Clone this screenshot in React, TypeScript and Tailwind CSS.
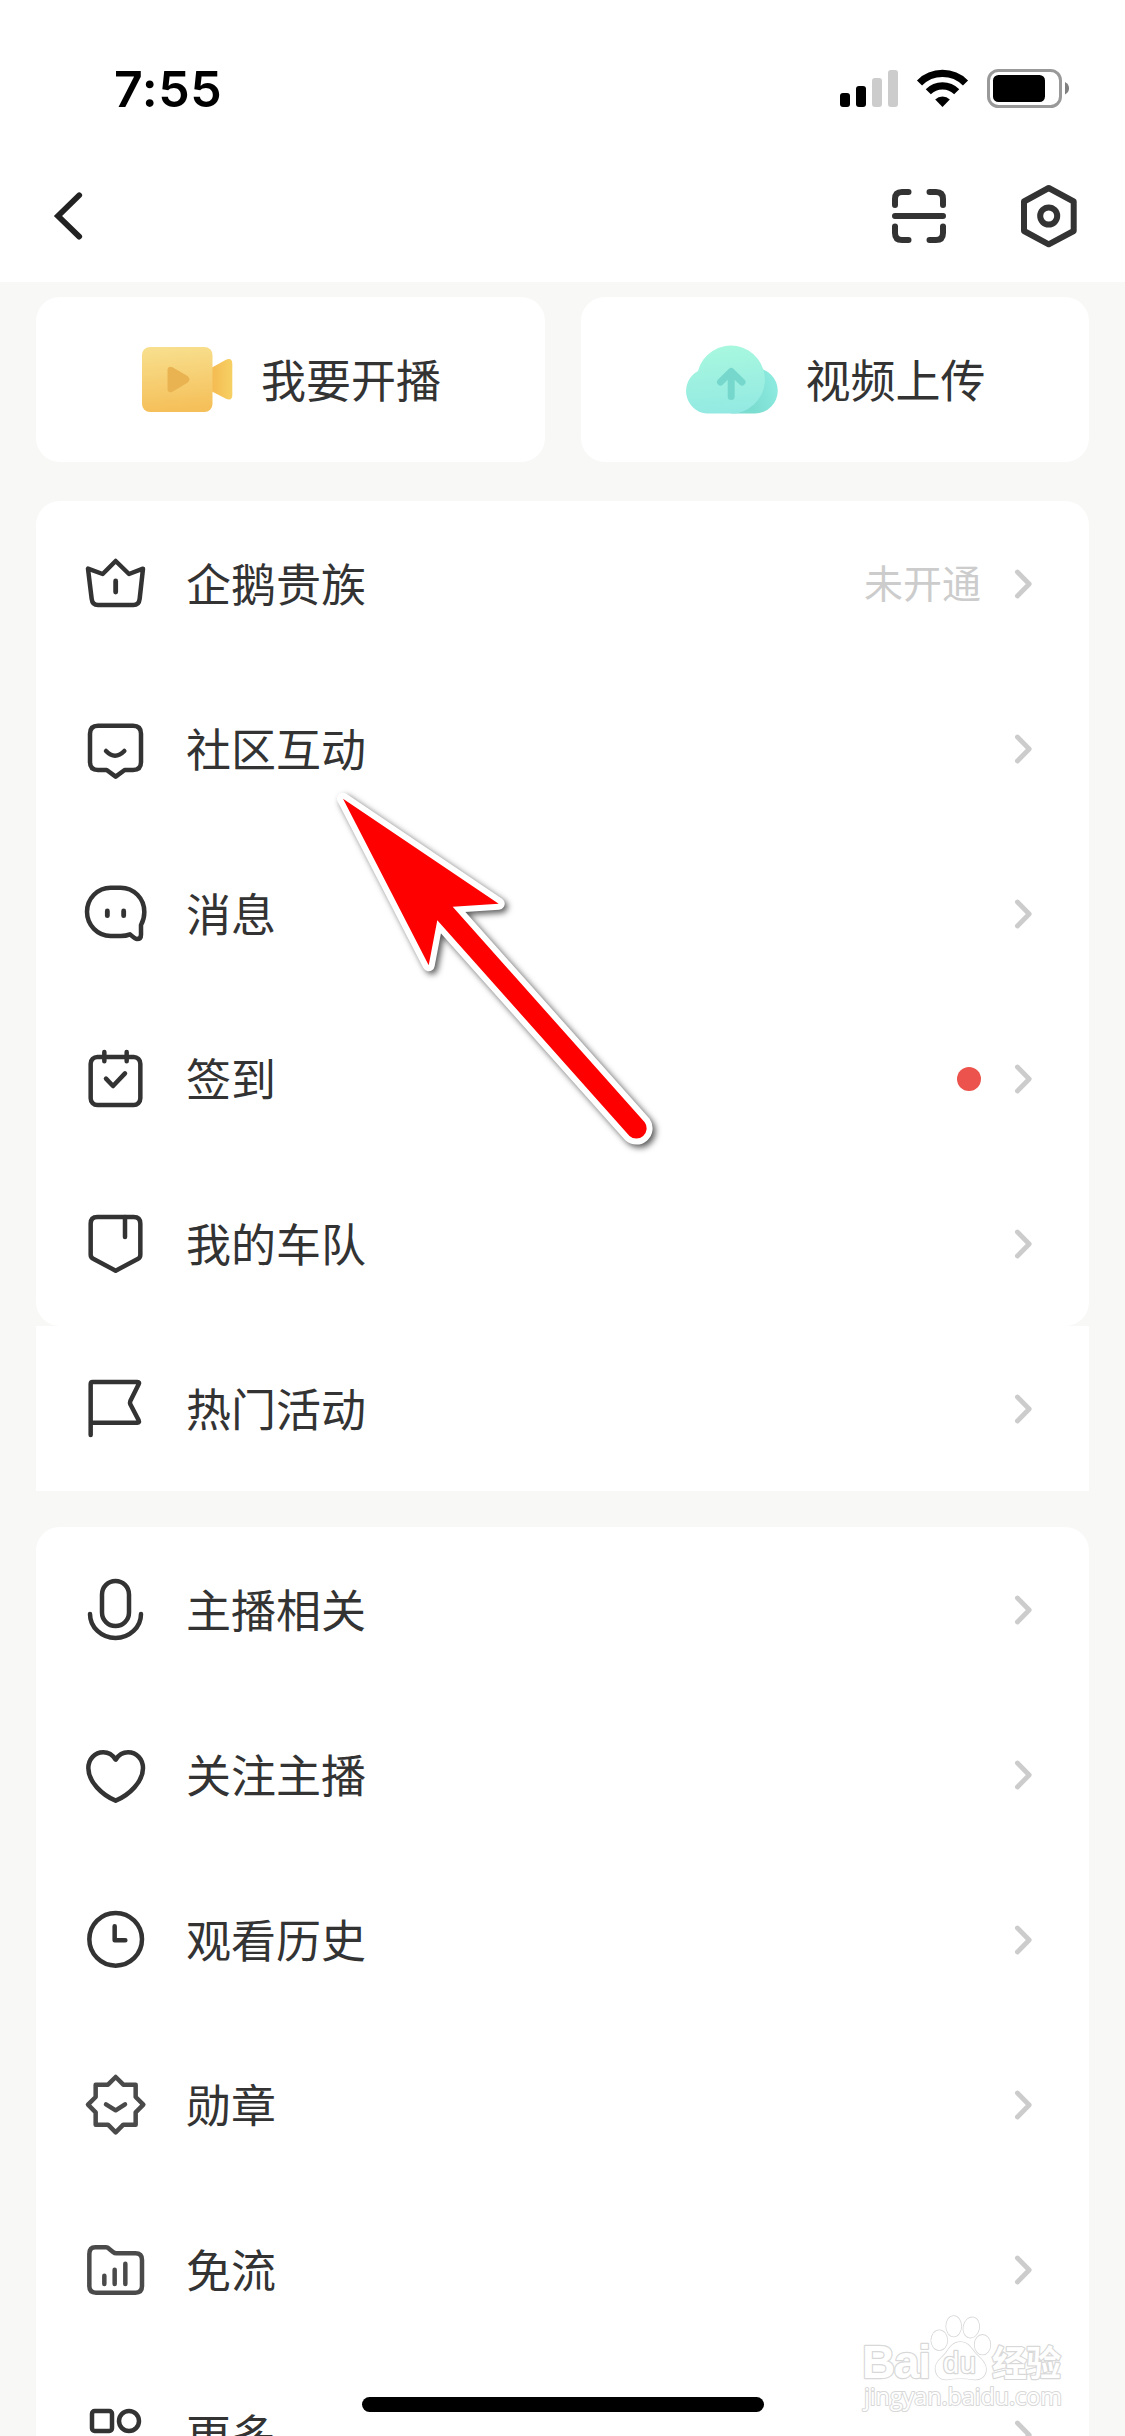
import type { ReactNode } from "react";

type RowData = {
  label: string;
  icon: ReactNode;
  muted?: boolean;
  note?: string;
  dot?: boolean;
};

function RowIcon({ children, muted }: { children: ReactNode; muted?: boolean }) {
  return (
    <svg
      viewBox="0 0 216 216"
      className={muted ? "size-[72px] shrink-0 text-[#4a4a4a]" : "size-[72px] shrink-0 text-[#333333]"}
      fill="none"
      stroke="currentColor"
      strokeWidth="13.5"
      strokeLinecap="round"
      strokeLinejoin="round"
    >
      {children}
    </svg>
  );
}

const primaryRows: RowData[] = [
  {
    label: "企鹅贵族",
    note: "未开通",
    icon: (
      <>
        <path d="M24 62 L35 152 Q37 171 54 171 H160 Q177 171 179 152 L189 62 L147 78 L107 39 L68 78 Z" />
        <path d="M107 99 V132" strokeWidth="14.5" />
      </>
    ),
  },
  {
    label: "社区互动",
    icon: (
      <>
        <path d="M54 38 H159 Q183 38 183 62 V147 Q183 171 159 171 H134 L107 191 L80 171 H54 Q30 171 30 147 V62 Q30 38 54 38 Z" />
        <path d="M78 114 Q105 142 133 114" />
      </>
    ),
  },
  {
    label: "消息",
    icon: (
      <>
        <path d="M92 174 A71 72.5 0 0 1 92 29 H122 A71 72.5 0 0 1 193 102 C193 118 188 132 183 141 V170 Q183 183 171 183 Q166 183 150 169 Q138 174 122 174 Z" />
        <path d="M82 99 V113 M131 99 V113" strokeWidth="14.5" />
      </>
    ),
  },
  {
    label: "签到",
    dot: true,
    icon: (
      <>
        <rect x="32" y="42" width="149" height="144" rx="20" />
        <path d="M73 27 V55 M140 27 V55 M78 107 L99 129 L135 91" />
      </>
    ),
  },
  {
    label: "我的车队",
    icon: (
      <>
        <path d="M52 27 H161 Q181 27 181 47 V140 Q181 149 173 153 L107 188 L41 153 Q32 149 32 140 V47 Q32 27 52 27 Z" />
        <path d="M135 27 V87" />
      </>
    ),
  },
];

const activityRows: RowData[] = [
  {
    label: "热门活动",
    icon: (
      <path d="M32 186 V33 Q32 27 38 27 H172 Q180 27 176 34 L151 84 Q149 89 151 94 L176 142 Q179 149 172 149 H32" />
    ),
  },
];

const secondaryRows: RowData[] = [
  {
    label: "主播相关",
    icon: (
      <>
        <rect x="66" y="21" width="81" height="135" rx="40.5" />
        <path d="M30 120 A76.5 72 0 0 0 183 120" />
      </>
    ),
  },
  {
    label: "关注主播",
    icon: (
      <path d="M107 62 C98 48 86 40 70 40 C44 40 25 60 25 88 C25 128 66 168 107 185 C148 168 189 128 189 88 C189 60 170 40 144 40 C128 40 116 48 107 62 Z" />
    ),
  },
  {
    label: "观看历史",
    icon: (
      <>
        <circle cx="107" cy="106" r="79" />
        <path d="M104 67 V109 H136" />
      </>
    ),
  },
  {
    label: "勋章",
    muted: true,
    icon: (
      <>
        <path d="M107 24 L130 47 H167 V84 L190 107 L167 130 V167 H130 L107 190 L84 167 H47 V130 L24 107 L47 84 V47 H84 Z" />
        <path d="M78 106 L107 124 L135 106" />
      </>
    ),
  },
  {
    label: "免流",
    muted: true,
    icon: (
      <>
        <path d="M46 40 H78 Q83 40 87 44 L99 54 Q104 58 109 58 H166 Q186 58 186 78 V156 Q186 176 166 176 H48 Q28 176 28 156 V60 Q28 40 46 40 Z" />
        <path d="M73 125 V150 M104 107 V150 M136 89 V150" />
      </>
    ),
  },
  {
    label: "更多",
    icon: (
      <>
        <rect x="36" y="36" width="60" height="60" rx="8" />
        <circle cx="147" cy="66" r="30" />
        <rect x="36" y="120" width="60" height="60" rx="8" />
        <rect x="117" y="120" width="60" height="60" rx="8" />
      </>
    ),
  },
];

function Row({ row }: { row: RowData }) {
  return (
    <div className="flex h-[165px] items-center pr-[56px] pl-[44px]">
      <RowIcon muted={row.muted}>{row.icon}</RowIcon>
      <span className="mb-[3px] ml-[34px] flex-1 text-[45px] leading-none text-[#333333]">{row.label}</span>
      {row.note && <span className="mb-[4px] text-[39px] leading-none text-[#cccccc]">{row.note}</span>}
      {row.dot && <span className="size-6 rounded-full bg-[#eb534c]" />}
      <svg
        viewBox="0 0 20 32"
        className="ml-[32px] h-8 w-5 shrink-0"
        fill="none"
        stroke="#cccccc"
        strokeWidth="4.8"
        strokeLinecap="round"
        strokeLinejoin="round"
      >
        <path d="M4.4 4 L16.2 16 L4.4 28" />
      </svg>
    </div>
  );
}

function StatusBar() {
  return (
    <div className="flex h-[132px] items-start justify-between pr-[56px] pl-[114px]">
      <span className="mt-[64px] font-['Inter'] text-[50px] leading-[50px] font-semibold tracking-[0.6px] text-black">
        7:55
      </span>
      <svg viewBox="840 66 229 46" className="mt-[66px] h-[46px] w-[229px]">
        <rect x="840" y="93" width="10" height="14" rx="3" />
        <rect x="856" y="86" width="10" height="21" rx="3" />
        <rect x="872" y="78" width="10" height="29" rx="3" fill="#cccccc" />
        <rect x="888" y="70" width="10" height="37" rx="3" fill="#cccccc" />
        <g fill="none" stroke="#000" strokeWidth="7.2">
          <path d="M919.5 83 A32.5 32.5 0 0 1 965.5 83" />
          <path d="M928.3 91.8 A20 20 0 0 1 956.7 91.8" />
        </g>
        <path d="M942.5 107 L935.2 99.6 A10.4 10.4 0 0 1 949.8 99.6 Z" />
        <rect x="988.5" y="70.5" width="72" height="36" rx="10" fill="none" stroke="#999999" strokeWidth="3" />
        <rect x="993" y="75" width="52" height="27" rx="5.5" />
        <path d="M1065 82 Q1069 84 1069 88.3 Q1069 92.5 1065 94.5 Z" fill="#808080" />
      </svg>
    </div>
  );
}

function NavBar() {
  return (
    <div className="flex h-[150px] items-start justify-between pr-[47px] pl-[50px]">
      <svg
        viewBox="50 186 40 60"
        className="mt-[54px] h-[60px] w-10"
        fill="none"
        stroke="#222222"
        strokeWidth="5.8"
        strokeLinecap="round"
      >
        <path d="M79.2 195.3 L58 216 L79.2 236.6" strokeLinejoin="miter" />
      </svg>
      <svg
        viewBox="888 180 190 72"
        className="mt-[48px] h-[72px] w-[190px]"
        fill="none"
        stroke="#333333"
        strokeWidth="6"
        strokeLinecap="round"
        strokeLinejoin="round"
      >
        <path d="M908.5 192 H902 Q895 192 895 199 V205 M929.5 192 H936 Q943 192 943 199 V205 M895 226.5 V233 Q895 240 902 240 H908.5 M943 226.5 V233 Q943 240 936 240 H929.5 M895 216 H943" />
        <path d="M1048.7 188 L1073.7 201.5 V231 L1048.7 244.3 L1024 231 V201.5 Z" />
        <circle cx="1048.7" cy="216" r="8.5" />
      </svg>
    </div>
  );
}

function CameraIcon() {
  return (
    <svg viewBox="142 345 92 70" className="h-[70px] w-[92px]">
      <defs>
        <linearGradient id="camBody" x1="0" y1="0" x2="0.1" y2="1">
          <stop offset="0" stopColor="#f8e08f" />
          <stop offset="1" stopColor="#f5c05a" />
        </linearGradient>
        <linearGradient id="camLens" x1="0" y1="0" x2="1" y2="0">
          <stop offset="0" stopColor="#f5bb52" />
          <stop offset="1" stopColor="#f6d063" />
        </linearGradient>
      </defs>
      <path d="M212 367.5 L225.5 360 Q232.3 357 232.3 364 V395 Q232.3 401.5 225.5 398.5 L212 391.5 Z" fill="url(#camLens)" />
      <rect x="142" y="347" width="70.5" height="65" rx="8" fill="url(#camBody)" />
      <path d="M167.5 370 Q168 365.5 172.5 367.3 L187.5 376 Q191.5 379.3 187.5 382.7 L172.5 391.7 Q168 393.5 167.5 389 Z" fill="#e9b352" />
    </svg>
  );
}

function CloudIcon() {
  return (
    <svg viewBox="684 344 96 72" className="h-[72px] w-24">
      <defs>
        <linearGradient id="cloudMain" gradientUnits="userSpaceOnUse" x1="726" y1="346" x2="732" y2="413">
          <stop offset="0" stopColor="#a8f8df" />
          <stop offset="1" stopColor="#93e9e2" />
        </linearGradient>
        <linearGradient id="cloudSide" gradientUnits="userSpaceOnUse" x1="752" y1="405" x2="778" y2="396">
          <stop offset="0" stopColor="#7bdcd0" />
          <stop offset="1" stopColor="#8be9de" />
        </linearGradient>
      </defs>
      <path d="M732 368 H756 A22.7 22.7 0 0 1 756 413.5 H732 Z" fill="url(#cloudSide)" />
      <path
        d="M699 371 A34 34 0 1 1 731.5 413.6 H707.7 A22.7 22.7 0 0 1 699 371 Z"
        fill="url(#cloudMain)"
      />
      <path
        d="M732.2 371.5 V396.5 M721.5 382 L732.2 371.5 L743 382"
        fill="none"
        stroke="#76d8cd"
        strokeWidth="7"
        strokeLinecap="round"
        strokeLinejoin="round"
      />
    </svg>
  );
}

function PointerArrow() {
  return (
    <svg
      viewBox="320 770 360 400"
      className="pointer-events-none absolute top-[770px] left-[320px] h-[400px] w-[360px] drop-shadow-[3px_3px_3px_rgba(0,0,0,0.65)]"
    >
      <path
        d="M343 798.7 L498.7 903.7 L452.7 906.7 L644.7 1122.3 A10.3 10.3 0 0 1 629.5 1136 L437.3 920.3 L428.7 965.3 Z"
        fill="#ff0000"
        stroke="#ffffff"
        strokeWidth="12"
        strokeLinejoin="round"
        paintOrder="stroke"
      />
    </svg>
  );
}

function Watermark() {
  return (
    <svg
      viewBox="855 2310 220 106"
      className="pointer-events-none absolute top-[2310px] left-[855px] h-[106px] w-[220px]"
      fill="#ffffff"
      stroke="#d8d8d8"
      strokeWidth="2.4"
      strokeLinejoin="round"
      paintOrder="stroke"
    >
      <text x="862" y="2378" fontFamily="Liberation Sans, sans-serif" fontWeight="700" fontSize="46" textLength="69">
        Bai
      </text>
      <g strokeWidth="1.6">
        <ellipse cx="939.3" cy="2340.3" rx="8" ry="10" />
        <ellipse cx="953.7" cy="2326.2" rx="7.5" ry="10.2" />
        <ellipse cx="971.3" cy="2327.5" rx="7.8" ry="10.2" transform="rotate(12 971.3 2327.5)" />
        <ellipse cx="982.5" cy="2344.7" rx="7.8" ry="9.8" />
        <path d="M960.7 2342 C968 2342 971 2348 975 2353 C981 2359 986 2363 986 2369 C986 2376 981 2380 974 2379.5 C966 2378 955 2378 947 2379.5 C940 2380 935.5 2375 935.5 2368 C936 2361 942 2358 946 2353 C950 2347 953 2342 960.7 2342 Z" />
      </g>
      <text x="943" y="2373" fontFamily="Liberation Sans, sans-serif" fontSize="29" textLength="33" strokeWidth="2.6">
        du
      </text>
      <text x="992" y="2375.5" fontFamily="Noto Sans CJK SC, sans-serif" fontWeight="700" fontSize="35" textLength="69">
        经验
      </text>
      <text x="864" y="2404.5" fontFamily="Open Sans, sans-serif" fontSize="23.5" textLength="198" strokeWidth="2">
        jingyan.baidu.com
      </text>
    </svg>
  );
}

export default function App() {
  return (
    <div className="relative h-[2436px] w-[1125px] overflow-hidden bg-[#f8f8f7] font-['Noto_Sans_CJK_SC',sans-serif]">
      <header className="bg-white">
        <StatusBar />
        <NavBar />
      </header>

      <main className="px-9 pt-[15px]">
        <div className="grid grid-cols-2 gap-9">
          <div className="flex h-[165px] items-center rounded-3xl bg-white pl-[106px]">
            <CameraIcon />
            <span className="mb-[3px] ml-[27px] text-[45px] leading-none text-[#333333]">我要开播</span>
          </div>
          <div className="flex h-[165px] items-center rounded-3xl bg-white pl-[102px]">
            <CloudIcon />
            <span className="mb-[3px] ml-[27px] text-[45px] leading-none text-[#333333]">视频上传</span>
          </div>
        </div>

        <section className="mt-[39px] rounded-3xl bg-white">
          {primaryRows.map((row) => (
            <Row key={row.label} row={row} />
          ))}
        </section>
        <section className="bg-white">
          {activityRows.map((row) => (
            <Row key={row.label} row={row} />
          ))}
        </section>
        <section className="mt-9 rounded-3xl bg-white">
          {secondaryRows.map((row) => (
            <Row key={row.label} row={row} />
          ))}
        </section>
      </main>

      <PointerArrow />
      <Watermark />
      <div className="absolute top-[2397px] left-[362px] h-[15px] w-[402px] rounded-full bg-black" />
    </div>
  );
}
